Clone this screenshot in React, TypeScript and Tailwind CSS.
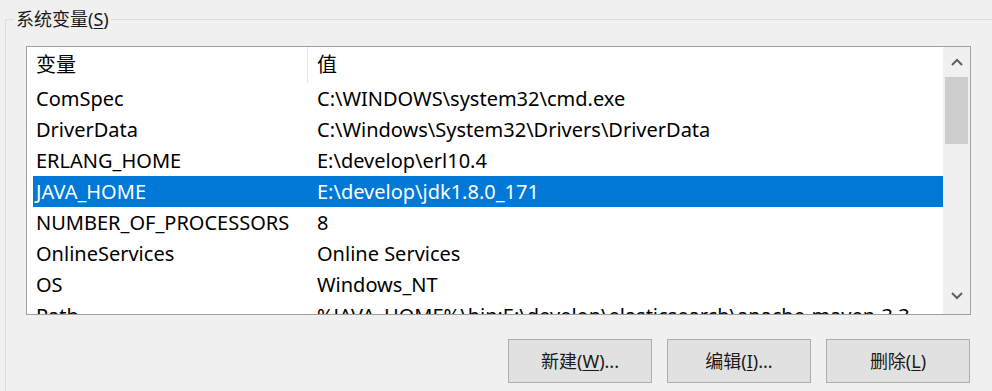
import React from "react";

const rows: [string, string][] = [
  ["ComSpec", "C:\\WINDOWS\\system32\\cmd.exe"],
  ["DriverData", "C:\\Windows\\System32\\Drivers\\DriverData"],
  ["ERLANG_HOME", "E:\\develop\\erl10.4"],
  ["JAVA_HOME", "E:\\develop\\jdk1.8.0_171"],
  ["NUMBER_OF_PROCESSORS", "8"],
  ["OnlineServices", "Online Services"],
  ["OS", "Windows_NT"],
  ["Path", "%JAVA_HOME%\\bin;E:\\develop\\elasticsearch\\apache-maven-3.3"],
];

const font = { fontFamily: '"Noto Sans", "Noto Sans CJK SC", sans-serif' };

export default function App() {
  return (
    <div
      className="w-[992px] h-[391px] overflow-hidden bg-[#f0f0f0] text-[#000] text-[20px]"
      style={font}
    >
      <fieldset className="ml-[5px] mt-[6px] w-[1010px] h-[420px] border border-[#dcdcdc] pl-[20px] pt-[14px]">
        <legend className="ml-[-12px] px-[2px] leading-[26px] text-[18px] text-[#1a1a1a]">
          系统变量(<span className="underline underline-offset-2">S</span>)
        </legend>

        {/* list box */}
        <div className="w-[945px] h-[269px] border border-[#a0a0a0] bg-white flex">
          <div className="flex-1 min-w-0 overflow-hidden">
            <div className="flex h-[36px] items-center">
              <div className="w-[281px] shrink-0 h-full pl-[9px] flex items-center border-r border-[#e5e5e5]">变量</div>
              <div className="pl-[9px]">值</div>
            </div>
            {rows.map(([k, v]) => {
              const sel = k === "JAVA_HOME";
              return (
                <div
                  key={k}
                  className={
                    sel
                      ? "flex h-[31px] items-center ml-[6px] bg-[#0078d7] text-white whitespace-nowrap"
                      : "flex h-[31px] items-center ml-[6px] whitespace-nowrap"
                  }
                >
                  <div className="w-[275px] shrink-0 pl-[3px]">{k}</div>
                  <div className="pl-[9px]">{v}</div>
                </div>
              );
            })}
          </div>
          {/* scrollbar */}
          <div className="w-[27px] shrink-0 bg-[#f0f0f0] flex flex-col">
            <div className="h-[30px] flex items-center justify-center">
              <svg width="12" height="8" viewBox="0 0 12 8">
                <path d="M1 7 L6 2 L11 7" fill="none" stroke="#606060" strokeWidth="2" />
              </svg>
            </div>
            <div className="h-[67px] mx-[2px] bg-[#cdcdcd]" />
            <div className="flex-1" />
            <div className="h-[30px] flex items-center justify-center mb-[3px]">
              <svg width="12" height="8" viewBox="0 0 12 8">
                <path d="M1 1 L6 6 L11 1" fill="none" stroke="#606060" strokeWidth="2" />
              </svg>
            </div>
          </div>
        </div>

        {/* buttons */}
        <div className="w-[945px] flex justify-end gap-[15px] mt-[24px] pr-[1px] text-[18px]">
          <button className="w-[144px] h-[44px] bg-[#e1e1e1] border border-[#adadad] text-[#1a1a1a]">
            新建(<span className="underline underline-offset-2">W</span>)...
          </button>
          <button className="w-[144px] h-[44px] bg-[#e1e1e1] border border-[#adadad] text-[#1a1a1a]">
            编辑(<span className="underline underline-offset-2">I</span>)...
          </button>
          <button className="w-[144px] h-[44px] bg-[#e1e1e1] border border-[#adadad] text-[#1a1a1a]">
            删除(<span className="underline underline-offset-2">L</span>)
          </button>
        </div>
      </fieldset>
    </div>
  );
}
